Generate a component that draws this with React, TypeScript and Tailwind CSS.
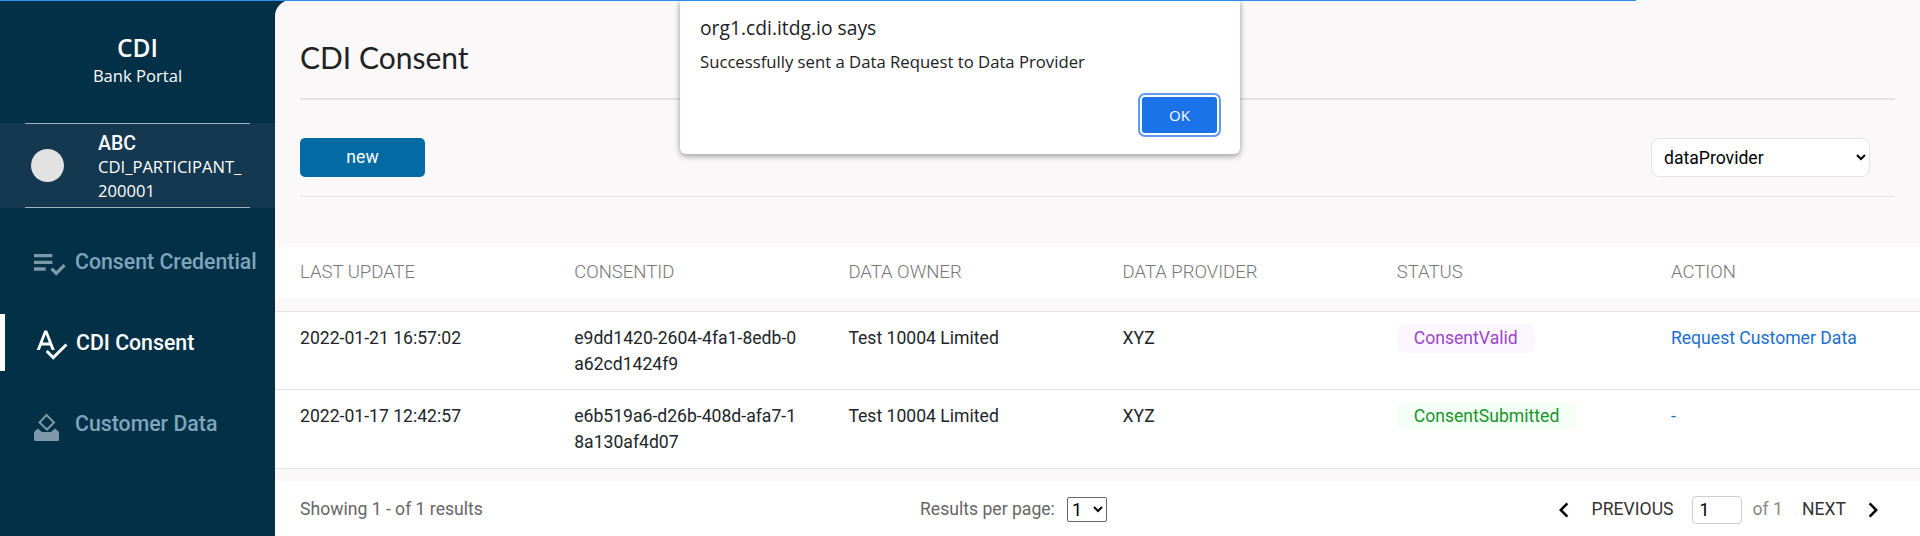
import { MdChevronLeft, MdChevronRight, MdPlaylistAddCheck, MdSpellcheck } from "react-icons/md";

const rows = [
  {
    date: "2022-01-21 16:57:02",
    id: ["e9dd1420-2604-4fa1-8edb-0", "a62cd1424f9"],
    owner: "Test 10004 Limited",
    provider: "XYZ",
    status: "ConsentValid",
    badge: "bg-[#fcf7fe] text-[#9b44cb] h-[29px] mt-[-4px]",
    action: "Request Customer Data",
  },
  {
    date: "2022-01-17 12:42:57",
    id: ["e6b519a6-d26b-408d-afa7-1", "8a130af4d07"],
    owner: "Test 10004 Limited",
    provider: "XYZ",
    status: "ConsentSubmitted",
    badge: "bg-[#f4fff6] text-[#17962b] h-[28px] mt-[-3px]",
    action: "-",
  },
];

const headers = ["LAST UPDATE", "CONSENTID", "DATA OWNER", "DATA PROVIDER", "STATUS", "ACTION"];

const Sidebar = () => {
  return (
    <aside className="w-[275px] h-full shrink-0 bg-[#023047] text-white">
      <div className="h-[123px] pt-[34px] text-center">
        <h1 className="font-['Open_Sans'] text-[24.500px] leading-[28px] font-semibold">CDI</h1>
        <p className="font-['Open_Sans'] text-[16.600px] leading-[22px] mt-[3px]">Bank Portal</p>
      </div>
      <div className="h-[85px] bg-[#13384f] relative flex items-center pl-[31px]">
        <div className="absolute left-[25px] right-[25px] top-0 h-px bg-[#9fb1bc]"></div>
        <div className="absolute left-[25px] right-[25px] bottom-0 h-px bg-[#9fb1bc]"></div>
        <div className="w-[33px] h-[33px] rounded-full bg-[#e2e2e2]"></div>
        <div className="ml-[34px]">
          <p className="font-['Roboto'] text-[19.500px] font-medium leading-[26px] mt-[2px] mb-[-2px]">ABC</p>
          <p className="font-['Open_Sans'] text-[16.600px] leading-[24px]">
            CDI_PARTICIPANT_
            <br />
            200001
          </p>
        </div>
      </div>
      <nav className="mt-[24px] font-['Roboto'] font-medium text-[21.300px]">
        <div className="h-[60px] flex items-center pl-[29px] text-[#7fa5bd]">
          <MdPlaylistAddCheck className="w-[40px] h-[40px] text-[#7d98a9] mt-[3px]" />
          <span className="ml-[6px]">Consent Credential</span>
        </div>
        <div className="h-[57px] mt-[22px] flex items-center pl-[28px] border-l-[5px] border-white text-white">
          <MdSpellcheck className="w-[36px] h-[36px] mt-[3px]" />
          <span className="ml-[7px]">CDI Consent</span>
        </div>
        <div className="h-[60px] mt-[23px] flex items-center pl-[34px] text-[#7fa5bd]">
          <svg viewBox="0 0 25 28" className="w-[25px] h-[28px] mt-[6px]">
            <path d="M12.5 2 20 9.5 13 16.5 5.500 9.500Z" fill="none" stroke="#7d98a9" strokeWidth="2" />
            <path d="M4 15.500 8 19H17L21 15.500 25 19V26.500A1.500 1.500 0 0 1 23.500 28H1.500A1.500 1.500 0 0 1 0 26.500V19Z" fill="#7d98a9" />
          </svg>
          <span className="ml-[16px]">Customer Data</span>
        </div>
      </nav>
    </aside>
  );
};

const Dialog = () => {
  return (
    <div className="absolute left-[680px] top-0 w-[560px] h-[154px] bg-white rounded-b-[6px] shadow-[0_2px_6px_rgba(0,0,0,0.4)] font-['Open_Sans'] text-[#202124]">
      <p className="absolute left-[20px] top-[15px] text-[19.300px] leading-[26px]">org1.cdi.itdg.io says</p>
      <p className="absolute left-[20px] top-[51px] text-[16.700px] leading-[22px]">Successfully sent a Data Request to Data Provider</p>
      <button className="absolute left-[460px] top-[95px] w-[79px] h-[40px] rounded-[5px] bg-[#1a73e8] border-2 border-white outline-2 outline-[#5f9bf0] text-white text-[15px]">
        OK
      </button>
    </div>
  );
};

export default function App() {
  return (
    <div className="relative w-[1920px] h-[536px] overflow-hidden flex bg-[#023047] font-['Roboto']">
      <div className="absolute left-0 top-0 w-[1636px] h-px bg-[#2d8cf0] z-10"></div>
      <Sidebar />
      <main className="flex-1 h-full bg-[#faf8f9] rounded-tl-[16px] overflow-hidden flex flex-col">
        <div className="px-[25px]">
          <div className="h-[100px] pt-[38px] border-b-2 border-[#e4e2e3] w-[1595px]">
            <h2 className="font-['Lato'] text-[30px] leading-[38px] text-[#222]">CDI Consent</h2>
          </div>
          <div className="h-[97px] w-[1595px] pt-[38px] border-b border-[#e4e2e3] flex justify-between">
            <button className="w-[125px] h-[39px] rounded-[5px] bg-[#036aa4] text-white text-[17.600px]">new</button>
            <select className="w-[219px] h-[39px] mr-[25px] pl-[8px] rounded-[8px] bg-white border border-[#e4e2e3] text-[17.600px] text-black outline-none">
              <option>dataProvider</option>
            </select>
          </div>
        </div>
        <div className="mt-[50px] h-[51px] bg-white grid grid-cols-[274.200px_274.200px_274.200px_274.200px_274.200px_1fr] pl-[25px] items-center text-[18.500px] font-light text-[#777]">
          {headers.map((h) => (
            <span key={h}>{h}</span>
          ))}
        </div>
        <div className="mt-[13px] bg-white border-t border-[#e4e2e3]">
          {rows.map((r) => (
            <div key={r.date} className="h-[78px] last:h-[79px] border-b border-[#e4e2e3] grid grid-cols-[274.200px_274.200px_274.200px_274.200px_274.200px_1fr] pl-[25px] pt-[13px] text-[17.600px] leading-[26px] text-[#212529]">
              <span>{r.date}</span>
              <span>
                {r.id[0]}
                <br />
                {r.id[1]}
              </span>
              <span>{r.owner}</span>
              <span>{r.provider}</span>
              <span>
                <span className={`inline-flex items-center px-[17px] rounded-[8px] ${r.badge}`}>{r.status}</span>
              </span>
              <span className="text-[#1a6fd0]">{r.action}</span>
            </div>
          ))}
        </div>
        <div className="mt-[12px] flex-1 bg-white relative flex items-center pl-[25px] pr-[32px] pt-[2px] text-[17.600px] text-[#666]">
          <span className="w-[620px]">Showing 1 - of 1 results</span>
          <span>Results per page:</span>
          <select className="ml-[12px] w-[40px] h-[25px] border border-[#666] rounded-[2px] text-[18px] text-black">
            <option>1</option>
          </select>
          <div className="ml-auto flex items-center">
            <MdChevronLeft className="w-[30px] h-[30px] text-black" />
            <span className="ml-[13px] text-[#333]">PREVIOUS</span>
            <input readOnly value="1" className="ml-[18px] w-[50px] h-[28px] pl-[7px] border border-[#ccc] rounded-[4px] text-[17.600px] text-black" />
            <span className="ml-[11px] text-[#888]">of 1</span>
            <span className="ml-[19px] text-[#333]">NEXT</span>
            <MdChevronRight className="ml-[12px] w-[30px] h-[30px] text-black" />
          </div>
        </div>
      </main>
      <Dialog />
    </div>
  );
}
